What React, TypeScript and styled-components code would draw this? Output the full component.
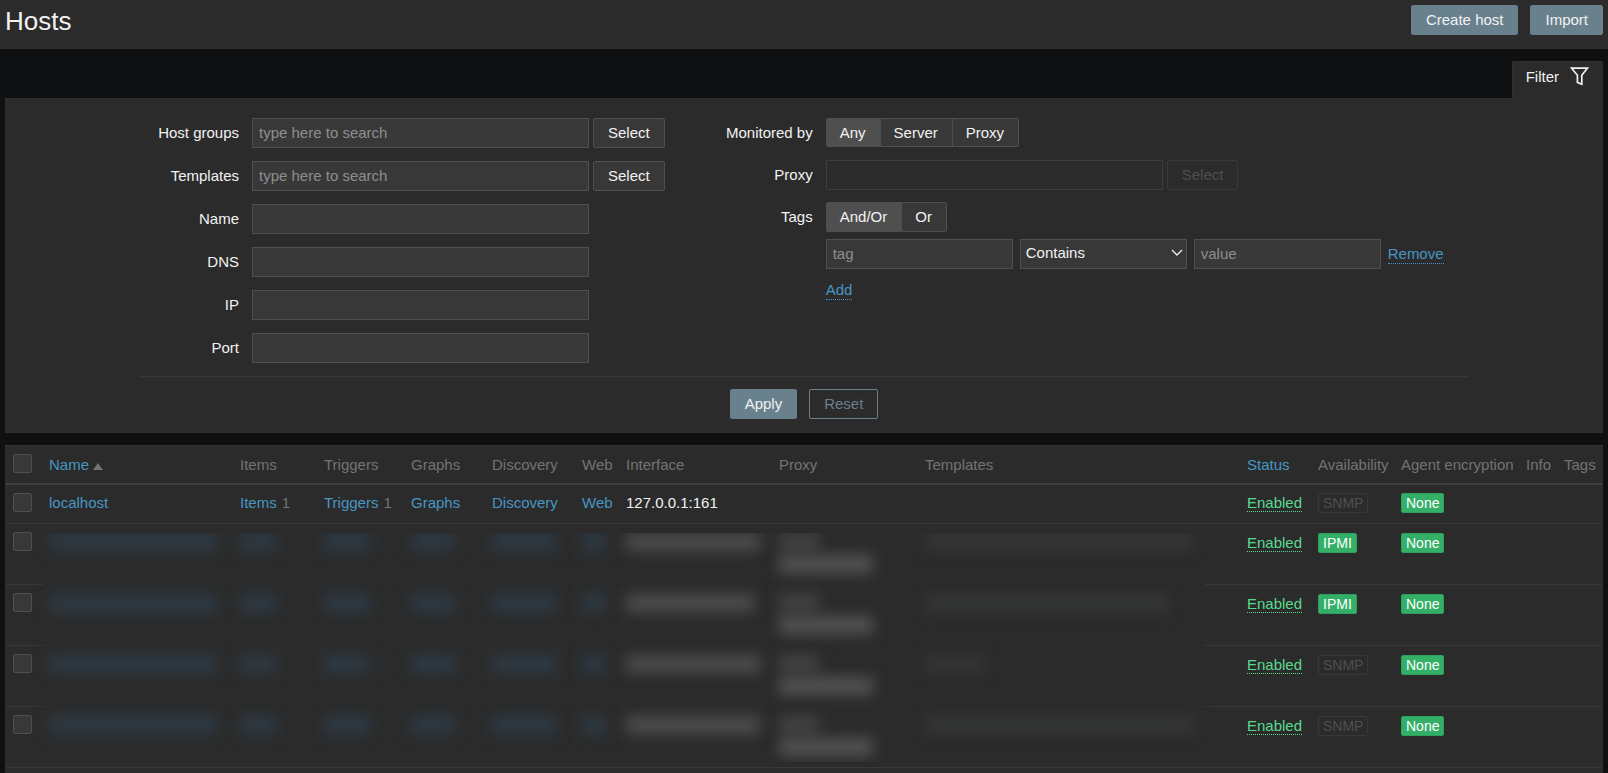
import React from "react";
import styled, { createGlobalStyle, css } from "styled-components";

const c = {
  page: "#0e1012",
  surface: "#2b2b2b",
  edge: "#303030",
  line: "#383838",
  control: "#383838",
  controlEdge: "#4f4f4f",
  text: "#f2f2f2",
  muted: "#737373",
  link: "#4796c4",
  primary: "#69808d",
  green: "#59db8f",
  badge: "#34af67",
};

const GlobalStyle = createGlobalStyle`
  *, *::before, *::after { box-sizing: border-box; }
  body {
    margin: 0;
    background: ${c.page};
    color: ${c.text};
    font: 15px/18px "Liberation Sans", Arial, sans-serif;
  }
  button, input, select { font: inherit; color: inherit; margin: 0; }
`;

const Page = styled.div`
  display: flex;
  flex-direction: column;
  min-height: 100vh;
`;

const Header = styled.header`
  display: flex;
  justify-content: space-between;
  align-items: flex-start;
  padding: 5px 5px 11px;
  background: ${c.surface};
  border-bottom: 1px solid ${c.edge};
`;

const Title = styled.h1`
  margin: 0;
  font-size: 26px;
  line-height: 32px;
  font-weight: 400;
`;

const Actions = styled.div`
  display: flex;
  gap: 12px;
`;

type Variant = "primary" | "outline" | "grey";

const Button = styled.button<{ $variant?: Variant }>`
  height: 30px;
  padding: 0 14px;
  border: 1px solid ${c.primary};
  border-radius: 2px;
  background: ${c.primary};
  color: ${c.text};
  cursor: pointer;
  ${(p) =>
    p.$variant === "outline" &&
    css`
      background: transparent;
      color: ${c.primary};
    `}
  ${(p) =>
    p.$variant === "grey" &&
    css`
      background: ${c.control};
      border-color: ${c.controlEdge};
    `}
  &:disabled {
    background: transparent;
    border-color: ${c.line};
    color: ${c.controlEdge};
    cursor: default;
  }
`;

const Main = styled.main`
  flex: 1;
  display: flex;
  flex-direction: column;
  padding: 12px 5px 0;
`;

const FilterTab = styled.button`
  align-self: flex-end;
  display: flex;
  align-items: flex-start;
  gap: 11px;
  height: 38px;
  margin-bottom: -1px;
  padding: 5px 13px 0;
  z-index: 1;
  background: ${c.surface};
  border: 1px solid ${c.edge};
  border-bottom: 0;
  border-radius: 2px 2px 0 0;
  cursor: pointer;
  svg { display: block; }
`;

const FilterTabText = styled.span`
  line-height: 19px;
`;

const FilterPanel = styled.form`
  display: flex;
  flex-direction: column;
  align-items: center;
  padding: 19px 12px 13px;
  background: ${c.surface};
  border: 1px solid ${c.edge};
  margin-bottom: 12px;
`;

const FilterColumns = styled.div`
  display: flex;
  gap: 49px;
  width: 100%;
  max-width: 1328px;
  padding-bottom: 13px;
`;

const FieldColumn = styled.div<{ $gap: number }>`
  display: flex;
  flex-direction: column;
  gap: ${(p) => p.$gap}px;
`;

const FieldRow = styled.div`
  display: flex;
  gap: 13px;
`;

const labelStyle = css`
  width: 99px;
  line-height: 30px;
  text-align: right;
  white-space: nowrap;
`;

const FieldLabel = styled.label`
  ${labelStyle}
`;

const GroupLabel = styled.span`
  ${labelStyle}
`;

const FieldBody = styled.div`
  display: flex;
  gap: 4px;
`;

const TextInput = styled.input<{ $width?: number }>`
  width: ${(p) => p.$width ?? 337}px;
  height: 30px;
  padding: 0 6px 2px;
  border: 1px solid ${c.controlEdge};
  border-radius: 0;
  background: ${c.control};
  outline: none;
  &::placeholder { color: #8e8e8e; opacity: 1; }
  &:disabled { background: transparent; border-color: #3d3d3d; }
`;

const Segments = styled.div<{ $height: number }>`
  display: flex;
  align-self: flex-start;
  height: ${(p) => p.$height}px;
`;

const HiddenRadio = styled.input`
  position: absolute;
  opacity: 0;
  width: 1px;
  height: 1px;
`;

const Segment = styled.label`
  display: flex;
  align-items: center;
  height: 100%;
  padding: 0 14px 0 13px;
  border: 1px solid ${c.controlEdge};
  background: ${c.control};
  cursor: pointer;
  & + & { border-left: 0; }
  &:first-child { border-radius: 2px 0 0 2px; }
  &:last-child { border-radius: 0 2px 2px 0; }
  &:has(input:checked) { background: ${c.controlEdge}; }
`;

const TagStack = styled.div`
  display: flex;
  flex-direction: column;
  align-items: flex-start;
`;

const TagRow = styled.div`
  display: flex;
  align-items: center;
  gap: 7px;
  margin: 7px 0 12px;
`;

const SelectWrap = styled.div`
  position: relative;
  svg {
    position: absolute;
    right: 4px;
    top: 10px;
    pointer-events: none;
  }
`;

const Select = styled.select`
  display: block;
  appearance: none;
  width: 167px;
  height: 30px;
  padding: 0 5px 2px;
  border: 1px solid ${c.controlEdge};
  border-radius: 0;
  background: ${c.control};
`;

const DottedLink = styled.a<{ $tone?: string }>`
  color: ${(p) => p.$tone ?? c.link};
  text-decoration: none;
  border-bottom: 1px dotted;
`;

const FilterFooter = styled.div`
  display: flex;
  justify-content: center;
  gap: 12px;
  width: 100%;
  max-width: 1328px;
  padding-top: 12px;
  border-top: 1px solid ${c.line};
`;

const TablePanel = styled.section`
  flex: 1;
  background: ${c.surface};
  border: 1px solid ${c.edge};
  border-bottom: 0;
`;

const Table = styled.table`
  width: 100%;
  table-layout: fixed;
  border-collapse: separate;
  border-spacing: 0;
`;

const HeadCell = styled.th`
  height: 39px;
  padding: 10px 6px 0;
  border-bottom: 2px solid #404040;
  color: ${c.muted};
  font-weight: 400;
  text-align: left;
  vertical-align: top;
  white-space: nowrap;
`;

const Cell = styled.td<{ $tall?: boolean; $line?: "none" | "tail" }>`
  height: ${(p) => (p.$tall ? 61 : 39)}px;
  padding: ${(p) => (p.$tall ? 10 : 9)}px 6px 0;
  border-bottom: 1px solid ${c.line};
  vertical-align: top;
  white-space: nowrap;
  ${(p) => p.$line && css`border-bottom-color: transparent;`}
  ${(p) =>
    p.$line === "tail" &&
    css`
      background: linear-gradient(${c.line}, ${c.line}) right bottom / 36px 1px no-repeat border-box;
    `}
`;

const checkPadding = css`
  padding: 8px 0 0 7px;
`;
const CheckHead = styled(HeadCell)`${checkPadding}`;
const CheckCell = styled(Cell)`${checkPadding}`;

const Checkbox = styled.input`
  display: block;
  appearance: none;
  width: 19px;
  height: 19px;
  border: 1px solid ${c.controlEdge};
  border-radius: 2px;
  background: ${c.control};
`;

const Link = styled.a`
  color: ${c.link};
  text-decoration: none;
`;

const Count = styled.span`
  color: ${c.muted};
  margin-left: 5px;
`;

const SortArrow = styled.span`
  display: inline-block;
  margin-left: 4px;
  border: 5px solid transparent;
  border-top: 0;
  border-bottom: 7px solid ${c.muted};
`;

const Badge = styled.span<{ $off?: boolean }>`
  display: inline-block;
  vertical-align: top;
  height: 20px;
  margin-top: -1px;
  padding: 0 4px;
  border: 1px solid ${(p) => (p.$off ? c.line : "#2f9f5e")};
  border-radius: 2px;
  background: ${(p) => (p.$off ? "transparent" : c.badge)};
  color: ${(p) => (p.$off ? c.controlEdge : "#ffffff")};
  font-size: 14px;
  line-height: 18px;
`;

/* Hidden values are drawn as soft bars clipped to the redacted area. */
const Redaction = styled.div<{ $edge?: "top" | "bottom" }>`
  height: 46px;
  margin-top: -1px;
  clip-path: ${(p) =>
    p.$edge === "top"
      ? "inset(0 -20px -12px -20px)"
      : p.$edge === "bottom"
        ? "inset(-12px -20px 0 -20px)"
        : "inset(-12px -20px -12px -20px)"};
`;

const Smear = styled.span<{ $width: number; $color: string }>`
  display: block;
  width: ${(p) => p.$width}px;
  height: 18px;
  margin-bottom: 4px;
  background: ${(p) => p.$color};
  filter: blur(7px);
`;

const FunnelIcon = () => (
  <svg width="19" height="19" viewBox="0 0 19 19" fill="none" stroke={c.text} strokeWidth="1.7" aria-hidden="true">
    <path d="M1.6 1.2H17.4L11.8 8.2V17.2L7.4 15.4V8.2Z" />
  </svg>
);

const ChevronIcon = () => (
  <svg width="12" height="8" viewBox="0 0 12 8" fill="none" stroke={c.text} strokeWidth="1.3" aria-hidden="true">
    <path d="M1 1L6 6L11 1" />
  </svg>
);

interface SegmentedProps {
  name: string;
  label: string;
  options: string[];
  height: number;
}

const Segmented = ({ name, label, options, height }: SegmentedProps) => (
  <Segments role="radiogroup" aria-label={label} $height={height}>
    {options.map((option, i) => (
      <Segment key={option}>
        <HiddenRadio type="radio" name={name} value={option} defaultChecked={i === 0} />
        {option}
      </Segment>
    ))}
  </Segments>
);

const textFields = [
  { id: "groups", label: "Host groups", search: true },
  { id: "templates", label: "Templates", search: true },
  { id: "name", label: "Name" },
  { id: "dns", label: "DNS" },
  { id: "ip", label: "IP" },
  { id: "port", label: "Port" },
];

const columns: { label: string; width?: number; sortable?: boolean; sorted?: boolean }[] = [
  { label: "Name", width: 191, sortable: true, sorted: true },
  { label: "Items", width: 84 },
  { label: "Triggers", width: 87 },
  { label: "Graphs", width: 81 },
  { label: "Discovery", width: 90 },
  { label: "Web", width: 44 },
  { label: "Interface", width: 153 },
  { label: "Proxy", width: 146 },
  { label: "Templates" },
  { label: "Status", width: 71, sortable: true },
  { label: "Availability", width: 83 },
  { label: "Agent encryption", width: 125 },
  { label: "Info", width: 38 },
  { label: "Tags", width: 44 },
];

const blue = "#2d3a44";
const grey = "#4c4c4c";

const redactedRows = [
  { type: "IPMI", on: true, iface: 134, templates: 268 },
  { type: "IPMI", on: true, iface: 128, templates: 244 },
  { type: "SNMP", on: false, iface: 134, templates: 60 },
  { type: "SNMP", on: false, iface: 134, templates: 270 },
];

const smears = (row: (typeof redactedRows)[number]): [number, string][][] => [
  [[168, blue]],
  [[36, blue]],
  [[46, blue]],
  [[44, blue]],
  [[64, blue]],
  [[24, blue]],
  [[row.iface, grey]],
  [[40, "#434343"], [94, "#525252"]],
  [[row.templates, "#343535"]],
];

const StatusCells = ({ type, on, tall }: { type: string; on: boolean; tall?: boolean }) => (
  <>
    <Cell $tall={tall}><DottedLink href="#status" $tone={c.green}>Enabled</DottedLink></Cell>
    <Cell $tall={tall}><Badge $off={!on}>{type}</Badge></Cell>
    <Cell $tall={tall}><Badge>None</Badge></Cell>
    <Cell $tall={tall} />
    <Cell $tall={tall} />
  </>
);

export default function App() {
  return (
    <Page>
      <GlobalStyle />
      <Header>
        <Title>Hosts</Title>
        <Actions>
          <Button type="button">Create host</Button>
          <Button type="button">Import</Button>
        </Actions>
      </Header>
      <Main>
        <FilterTab type="button">
          <FilterTabText>Filter</FilterTabText>
          <FunnelIcon />
        </FilterTab>
        <FilterPanel onSubmit={(e) => e.preventDefault()}>
          <FilterColumns>
            <FieldColumn $gap={13}>
              {textFields.map((f) => (
                <FieldRow key={f.id}>
                  <FieldLabel htmlFor={f.id}>{f.label}</FieldLabel>
                  <FieldBody>
                    <TextInput id={f.id} type="text" placeholder={f.search ? "type here to search" : undefined} />
                    {f.search && <Button type="button" $variant="grey">Select</Button>}
                  </FieldBody>
                </FieldRow>
              ))}
            </FieldColumn>
            <FieldColumn $gap={12}>
              <FieldRow>
                <GroupLabel>Monitored by</GroupLabel>
                <Segmented name="monitored" label="Monitored by" options={["Any", "Server", "Proxy"]} height={29} />
              </FieldRow>
              <FieldRow>
                <FieldLabel htmlFor="proxy">Proxy</FieldLabel>
                <FieldBody>
                  <TextInput id="proxy" type="text" disabled />
                  <Button type="button" $variant="grey" disabled>Select</Button>
                </FieldBody>
              </FieldRow>
              <FieldRow>
                <GroupLabel>Tags</GroupLabel>
                <TagStack>
                  <Segmented name="tags" label="Tags" options={["And/Or", "Or"]} height={30} />
                  <TagRow>
                    <TextInput type="text" aria-label="Tag" placeholder="tag" $width={187} />
                    <SelectWrap>
                      <Select aria-label="Operator" defaultValue="Contains">
                        <option>Contains</option>
                      </Select>
                      <ChevronIcon />
                    </SelectWrap>
                    <TextInput type="text" aria-label="Value" placeholder="value" $width={187} />
                    <DottedLink href="#remove">Remove</DottedLink>
                  </TagRow>
                  <DottedLink href="#add">Add</DottedLink>
                </TagStack>
              </FieldRow>
            </FieldColumn>
          </FilterColumns>
          <FilterFooter>
            <Button type="submit">Apply</Button>
            <Button type="reset" $variant="outline">Reset</Button>
          </FilterFooter>
        </FilterPanel>
        <TablePanel>
          <Table>
            <colgroup>
              <col style={{ width: 37 }} />
              {columns.map((col) => (
                <col key={col.label} style={{ width: col.width }} />
              ))}
            </colgroup>
            <thead>
              <tr>
                <CheckHead><Checkbox type="checkbox" aria-label="Select all hosts" /></CheckHead>
                {columns.map((col) => (
                  <HeadCell key={col.label} scope="col">
                    {col.sortable ? <Link href="#sort">{col.label}</Link> : col.label}
                    {col.sorted && <SortArrow />}
                  </HeadCell>
                ))}
              </tr>
            </thead>
            <tbody>
              <tr>
                <CheckCell><Checkbox type="checkbox" aria-label="Select localhost" /></CheckCell>
                <Cell><Link href="#host">localhost</Link></Cell>
                <Cell><Link href="#items">Items</Link><Count>1</Count></Cell>
                <Cell><Link href="#triggers">Triggers</Link><Count>1</Count></Cell>
                <Cell><Link href="#graphs">Graphs</Link></Cell>
                <Cell><Link href="#discovery">Discovery</Link></Cell>
                <Cell><Link href="#web">Web</Link></Cell>
                <Cell>127.0.0.1:161</Cell>
                <Cell />
                <Cell />
                <StatusCells type="SNMP" on={false} />
              </tr>
              {redactedRows.map((row, i) => {
                const last = i === redactedRows.length - 1;
                const edge = i === 0 ? "top" : last ? "bottom" : undefined;
                return (
                  <tr key={i}>
                    <CheckCell $tall><Checkbox type="checkbox" aria-label={`Select host ${i + 2}`} /></CheckCell>
                    {smears(row).map((bars, j, all) => (
                      <Cell key={j} $tall $line={last ? undefined : j === all.length - 1 ? "tail" : "none"}>
                        <Redaction $edge={edge} aria-hidden="true">
                          {bars.map(([width, color], k) => (
                            <Smear key={k} $width={width} $color={color} />
                          ))}
                        </Redaction>
                      </Cell>
                    ))}
                    <StatusCells type={row.type} on={row.on} tall />
                  </tr>
                );
              })}
            </tbody>
          </Table>
        </TablePanel>
      </Main>
    </Page>
  );
}
